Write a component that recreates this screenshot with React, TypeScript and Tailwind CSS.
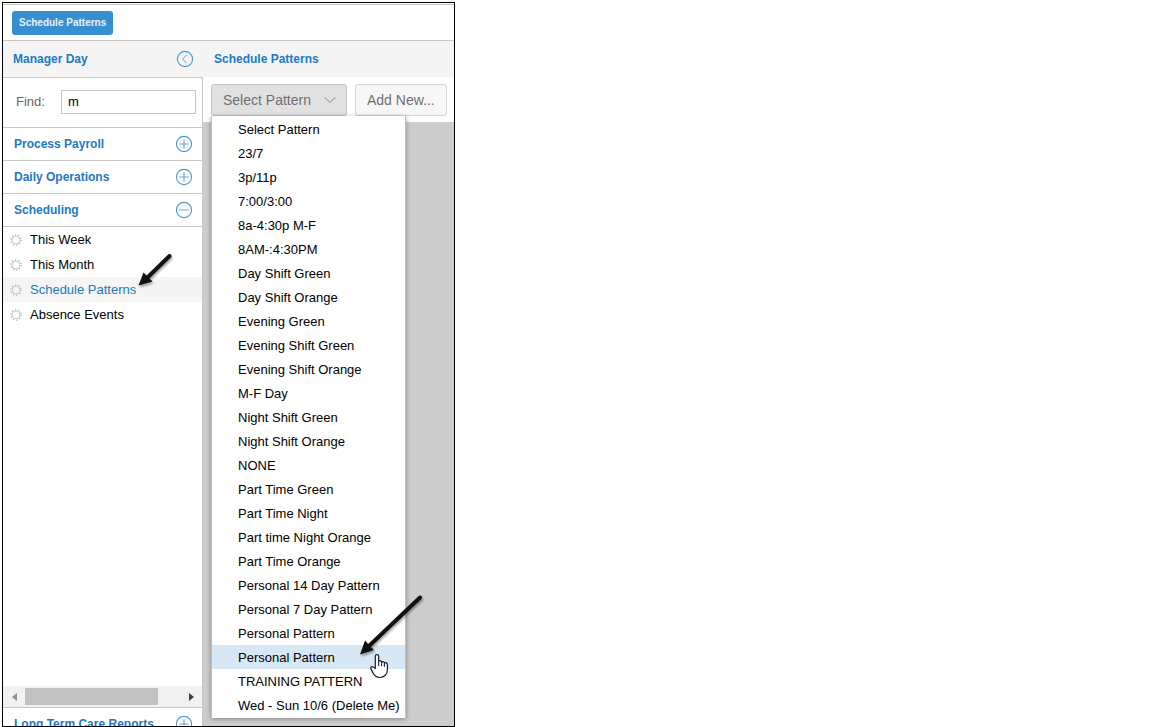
import React, { useState } from 'react';

const patterns = [
    'Select Pattern',
    '23/7',
    '3p/11p',
    '7:00/3:00',
    '8a-4:30p M-F',
    '8AM-:4:30PM',
    'Day Shift Green',
    'Day Shift Orange',
    'Evening Green',
    'Evening Shift Green',
    'Evening Shift Orange',
    'M-F Day',
    'Night Shift Green',
    'Night Shift Orange',
    'NONE',
    'Part Time Green',
    'Part Time Night',
    'Part time Night Orange',
    'Part Time Orange',
    'Personal 14 Day Pattern',
    'Personal 7 Day Pattern',
    'Personal Pattern',
    'Personal Pattern',
    'TRAINING PATTERN',
    'Wed - Sun 10/6 (Delete Me)',
];

const schedulingLinks = ['This Week', 'This Month', 'Schedule Patterns', 'Absence Events'];

const CircleIcon = ({ d }: { d: string }) => (
    <svg className="w-[18px] h-[18px] shrink-0" viewBox="0 0 18 18" fill="none" stroke="#4d97d1">
        <circle cx="9" cy="9" r="7.6" strokeWidth="1.1" />
        <path d={d} strokeWidth="0.9" />
    </svg>
);

const PLUS = 'M4.300 9h9.400M9 4.300v9.400';
const MINUS = 'M4.300 9h9.400';
const CHEVRON_LEFT = 'M10.600 4.800L6.600 9l4 4.200';

const GearIcon = () => (
    <svg className="w-3 h-3 shrink-0" viewBox="0 0 12 12" fill="none" stroke="#bdbdbd">
        <circle cx="6" cy="6" r="3.9" strokeWidth="0.8" />
        <circle cx="6" cy="6" r="5.1" strokeWidth="1.6" strokeDasharray="1.2 2.004" />
    </svg>
);

interface AccordionHeaderProps {
    title: string;
    open?: boolean;
    onClick?: () => void;
}

const AccordionHeader = ({ title, open = false, onClick }: AccordionHeaderProps) => (
    <button
        type="button"
        onClick={onClick}
        aria-expanded={open}
        className="w-full h-[33px] shrink-0 flex items-center justify-between pl-[11px] pr-[9px] border-b border-[#c8c8c8] text-xs font-bold text-[#2079c3]"
    >
        {title}
        <CircleIcon d={open ? MINUS : PLUS} />
    </button>
);

const Sidebar = () => {
    const [find, setFind] = useState('m');
    const [open, setOpen] = useState(true);

    return (
        <aside className="w-[200px] shrink-0 flex flex-col min-h-0">
            <div className="h-9 shrink-0 flex items-center justify-between pl-2.5 pr-[9px] bg-[#f5f5f5]">
                <h2 className="text-xs font-bold text-[#2079c3]">Manager Day</h2>
                <button type="button" aria-label="Collapse">
                    <CircleIcon d={CHEVRON_LEFT} />
                </button>
            </div>

            <div className="flex-1 min-h-0 flex flex-col border-t border-r border-[#c8c8c8]">
                <div className="h-[50px] shrink-0 flex items-center gap-4 pl-[13px] pr-1.5 pb-0.5 border-b border-[#c8c8c8]">
                    <label htmlFor="find" className="text-[13px] text-[#666]">Find:</label>
                    <input
                        id="find"
                        type="text"
                        value={find}
                        onChange={(e) => setFind(e.target.value)}
                        className="flex-1 min-w-0 h-6 px-1.5 border border-[#c4c4c4] bg-white text-[13px] text-black"
                    />
                </div>

                <AccordionHeader title="Process Payroll" />
                <AccordionHeader title="Daily Operations" />
                <AccordionHeader title="Scheduling" open={open} onClick={() => setOpen(!open)} />

                <nav className="flex-1 min-h-0 overflow-hidden">
                    {open && schedulingLinks.map((link) => (
                        <a
                            key={link}
                            href="#"
                            className={`h-[25px] flex items-center gap-2 pl-[7px] text-[13px] ${
                                link === 'Schedule Patterns' ? 'bg-[#f5f5f5] text-[#2079c3]' : 'text-black'
                            }`}
                        >
                            <GearIcon />
                            {link}
                        </a>
                    ))}
                </nav>

                {/* Horizontal scroller */}
                <div className="h-[22px] shrink-0 flex items-center pl-[5px] pr-1.5 bg-[#f1f1f1] border-b border-[#c8c8c8]">
                    <svg className="w-[17px] h-2 shrink-0" viewBox="0 0 17 8" fill="#8f8f8f">
                        <path d="M9 0v8L4 4z" />
                    </svg>
                    <div className="w-[133px] h-[17px] bg-[#c1c1c1]" />
                    <svg className="w-2 h-2 ml-auto" viewBox="0 0 8 8" fill="#404040">
                        <path d="M1 0v8l5-4z" />
                    </svg>
                </div>

                <div className="h-[18px] shrink-0 overflow-hidden">
                    <AccordionHeader title="Long Term Care Reports" />
                </div>
            </div>
        </aside>
    );
};

const PatternPicker = () => {
    const [open, setOpen] = useState(true);
    const [active, setActive] = useState(22);

    return (
        <div className="relative">
            <button
                type="button"
                aria-haspopup="menu"
                aria-expanded={open}
                onClick={() => setOpen(!open)}
                className="w-[136px] h-8 flex items-center justify-between pl-[11px] pr-2.5 rounded-[3px] border border-[#c4c4c4] bg-[#e1e1e1] text-sm text-[#707070]"
            >
                Select Pattern
                <svg className="w-3 h-2" viewBox="0 0 12 8" fill="none" stroke="#aaa" strokeWidth="1.2">
                    <path d="M.7 1.5L6 6.5l5.300-5" />
                </svg>
            </button>

            {open && (
                <div
                    role="menu"
                    className="absolute top-full left-0 w-[195px] py-px bg-white border-x border-[#c0c0c0] shadow-[0_1px_5px_rgba(0,0,0,0.35)]"
                >
                    {patterns.map((pattern, i) => (
                        <button
                            key={i}
                            type="button"
                            role="menuitem"
                            onMouseEnter={() => setActive(i)}
                            className={`block w-full h-6 pt-0.5 pl-[26px] text-left text-[13px] text-black whitespace-nowrap ${
                                i === active ? 'bg-[#d6e8f6]' : ''
                            }`}
                        >
                            {pattern}
                        </button>
                    ))}
                </div>
            )}
        </div>
    );
};

const Arrows = () => (
    <svg
        className="absolute -top-px -left-px w-[453px] h-[725px] pointer-events-none"
        viewBox="2 2 453 725"
        fill="none"
    >
        <g className="drop-shadow-[1px_2px_1px_rgba(0,0,0,0.35)]">
            <path d="M169.500 256L147 278" stroke="#111" strokeWidth="4" strokeLinecap="round" />
            <path d="M138.500 285.500L143.500 272.500L147.500 276.500L152.500 281.500z" fill="#111" />
            <path d="M420 597.500L369 646" stroke="#111" strokeWidth="4" strokeLinecap="round" />
            <path d="M360 654.500L365 640.500L369 645L374 650z" fill="#111" />
        </g>
        {/* Hand pointer */}
        <path
            d="M375.300 668.500V656.300c0-2.300 3.400-2.300 3.400 0v4.800c1-.7 2.600-.3 2.900.8 1-.6 2.500-.1 2.800.9 1.200-.6 3 .1 3 1.900v5.300c0 4-2.900 7.500-7.700 7.500-3.800 0-5.500-2-6.600-4.400l-2.200-4.200c-.8-1.900 1.400-2.900 2.600-1.800z"
            fill="#fff"
            stroke="#1a1a2a"
            strokeWidth="1.200"
            strokeLinejoin="round"
        />
        <path d="M378.700 661v5M381.600 661.800v4.500M384.400 662.800v4" stroke="#1a1a2a" strokeWidth="1.100" />
    </svg>
);

const App = () => {
    return (
        <div className="h-screen pt-0.5 pl-0.5 bg-white font-['Liberation_Sans',Arial,sans-serif]">
            <div className="relative w-full max-w-[453px] h-full flex flex-col border border-black bg-white">
                <div className="mt-px h-[37px] shrink-0 flex items-center px-[9px] border-y border-[#c8c8c8]">
                    <button type="button" className="h-6 px-[7px] rounded-[3px] bg-[#378fd3] text-[10px] font-bold text-[#e6f2fb]">
                        Schedule Patterns
                    </button>
                </div>

                <div className="flex-1 min-h-0 flex">
                    <Sidebar />

                    <main className="flex-1 min-w-0 flex flex-col">
                        <div className="h-9 shrink-0 flex items-center pl-[11px] bg-[#f5f5f5]">
                            <h1 className="text-xs font-bold text-[#2079c3]">Schedule Patterns</h1>
                        </div>
                        <div className="h-[45px] shrink-0 flex items-center gap-2 px-2">
                            <PatternPicker />
                            <button
                                type="button"
                                className="h-8 px-[11px] rounded-[3px] border border-[#d4d4d4] bg-[#f7f7f7] text-sm text-[#707070] whitespace-nowrap"
                            >
                                Add New...
                            </button>
                        </div>
                        <div className="flex-1 bg-[#cdcdcd]" />
                    </main>
                </div>

                <Arrows />
            </div>
        </div>
    );
};

export default App;
